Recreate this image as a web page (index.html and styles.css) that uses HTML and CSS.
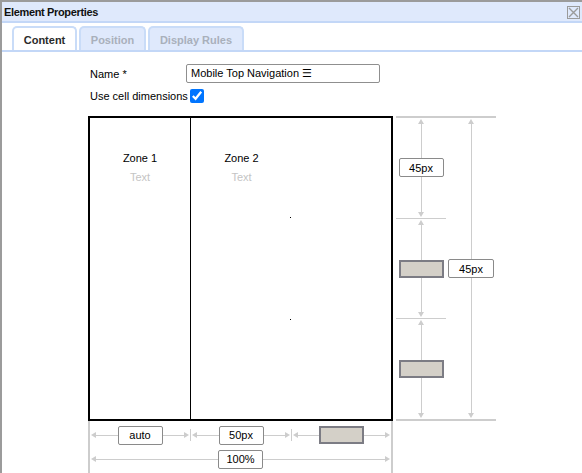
FILE: index.html
```html
<!DOCTYPE html>
<html lang="en">
<head>
    <meta charset="UTF-8">
    <title>Element Properties</title>
    <link rel="stylesheet" href="styles.css">
</head>
<body>
    <div class="dialog">
        <div class="titlebar">
            <span class="title">Element Properties</span>
            <svg class="close" width="13" height="13" viewBox="0 0 13 13">
                <rect x="0.5" y="0.5" width="12" height="12" fill="none" stroke="#9a9a9a"/>
                <path d="M2 2 L11 11 M11 2 L2 11" stroke="#9a9a9a" stroke-width="1.4"/>
            </svg>
        </div>

        <div class="tabs">
            <div class="tab active tab-content">Content</div>
            <div class="tab tab-position">Position</div>
            <div class="tab tab-rules">Display Rules</div>
        </div>

        <div class="content">
            <div class="row">
                <label class="label">Name *</label>
                <input type="text" class="name-input" value="Mobile Top Navigation ☰">
            </div>
            <div class="row check-row">
                <label>Use cell dimensions</label>
                <input type="checkbox" class="check" checked>
            </div>

            <div class="layout">
                <div class="frame">
                    <div class="zone zone-first">
                        <div class="zone-name">Zone 1</div>
                        <div class="zone-text">Text</div>
                    </div>
                    <div class="zone">
                        <div class="zone-name">Zone 2</div>
                        <div class="zone-text">Text</div>
                        <span class="dot dot-a"></span>
                        <span class="dot dot-b"></span>
                    </div>
                    <div class="zone"></div>
                </div>

                <div class="vruler">
                    <div class="vcol">
                        <div class="vseg">
                            <span class="arr-up"></span><span class="vline"></span>
                            <input type="text" class="size" value="45px">
                            <span class="vline"></span><span class="arr-down"></span>
                        </div>
                        <div class="vseg tick-top">
                            <span class="arr-up"></span><span class="vline"></span>
                            <div class="blank"></div>
                            <span class="vline"></span><span class="arr-down"></span>
                        </div>
                        <div class="vseg tick-top">
                            <span class="arr-up"></span><span class="vline"></span>
                            <div class="blank"></div>
                            <span class="vline"></span><span class="arr-down"></span>
                        </div>
                    </div>
                    <div class="vcol">
                        <div class="vseg">
                            <span class="arr-up"></span><span class="vline"></span>
                            <input type="text" class="size wide" value="45px">
                            <span class="vline"></span><span class="arr-down"></span>
                        </div>
                    </div>
                </div>

                <div class="hruler">
                    <div class="hrow">
                        <div class="hseg">
                            <span class="arr-left"></span><span class="hline"></span>
                            <input type="text" class="size" value="auto">
                            <span class="hline"></span><span class="arr-right"></span>
                        </div>
                        <span class="tick"></span>
                        <div class="hseg">
                            <span class="arr-left"></span><span class="hline"></span>
                            <input type="text" class="size" value="50px">
                            <span class="hline"></span><span class="arr-right"></span>
                        </div>
                        <span class="tick"></span>
                        <div class="hseg">
                            <span class="arr-left"></span><span class="hline"></span>
                            <div class="blank"></div>
                            <span class="hline"></span><span class="arr-right"></span>
                        </div>
                    </div>
                    <div class="hseg total">
                        <span class="arr-left"></span><span class="hline"></span>
                        <input type="text" class="size" value="100%">
                        <span class="hline"></span><span class="arr-right"></span>
                    </div>
                </div>
            </div>
        </div>
    </div>
</body>
</html>
```

FILE: styles.css
```css
body {
    margin: 0;
    font-family: "Liberation Sans", Arial, sans-serif;
    font-size: 11px;
    color: #000;
    background-color: #fff;
}
.dialog {
    height: 471px;
    border-top: 2px solid #9b9b9b;
    border-left: 2px solid #9b9b9b;
    overflow: hidden;
}
.titlebar {
    height: 19px;
    display: flex;
    align-items: center;
    justify-content: space-between;
    padding: 0 2px 0 2px;
    background-color: #dfe9fc;
    border-bottom: 2px solid #c3d7f7;
}
.title {
    font-weight: bold;
    font-size: 11px;
    letter-spacing: -0.35px;
    color: #111;
}
.close {
    display: block;
    margin-top: 1px;
}
.tabs {
    display: flex;
    gap: 2px;
    padding: 3px 0 0 10px;
    border-bottom: 2px solid #c3d7f7;
}
.tab {
    height: 22px;
    line-height: 24px;
    text-align: center;
    font-weight: bold;
    color: #a9b0bb;
    background-color: #dfe9fc;
    border: 2px solid #c9dcf8;
    border-bottom: 0;
    border-radius: 5px 5px 0 0;
    box-sizing: content-box;
}
.tab.active {
    background-color: #fff;
    color: #2a2a2a;
}
.tab-content { width: 61px; }
.tab-position { width: 63px; }
.tab-rules { width: 92px; }

.content {
    padding: 12px 0 0 86px;
}
.row {
    display: flex;
    align-items: center;
}
.label {
    width: 96px;
    padding-left: 2px;
}
.name-input {
    width: 194px;
    height: 19px;
    box-sizing: border-box;
    margin: 0;
    padding: 0 4px;
    border: 1px solid #8f8f8f;
    border-radius: 2px;
    font-family: "Liberation Sans", "DejaVu Sans", Arial, sans-serif;
    font-size: 11px;
}
.check-row {
    margin-top: 6px;
    padding-left: 2px;
}
.check {
    width: 14px;
    height: 14px;
    margin: 0 0 0 2px;
}

.layout {
    display: grid;
    grid-template-columns: 305px 103px;
    grid-template-rows: 305px 52px;
    margin-top: 13px;
}
.frame {
    display: grid;
    grid-template-columns: 101px 101px 1fr;
    border: 2px solid #000;
}
.zone {
    position: relative;
    text-align: center;
    padding-top: 33px;
}
.zone-first {
    border-right: 1px solid #000;
}
.zone-name {
    line-height: 14px;
}
.zone-text {
    margin-top: 5px;
    line-height: 14px;
    color: #c4c4c4;
}
.dot {
    position: absolute;
    right: 1px;
    width: 1px;
    height: 1px;
    background-color: #000;
}
.dot-a { top: 99px; }
.dot-b { top: 201px; }

.size {
    width: 45px;
    height: 19px;
    box-sizing: border-box;
    margin: 0;
    padding: 0;
    border: 1px solid #8a8a8a;
    border-radius: 2px;
    text-align: center;
    font-family: "Liberation Sans", Arial, sans-serif;
    font-size: 11px;
    flex: none;
}
.size.wide {
    width: 46px;
}
.blank {
    width: 45px;
    height: 18px;
    box-sizing: border-box;
    background-color: #d4d0c8;
    border: 2px solid #7c7c84;
    flex: none;
}

.vruler {
    display: grid;
    grid-template-columns: 50px 50px;
    margin-left: 3px;
    border-top: 2px solid #cdcdcd;
    border-bottom: 2px solid #cdcdcd;
}
.vcol {
    display: flex;
    flex-direction: column;
}
.vseg {
    flex: 1;
    display: flex;
    flex-direction: column;
    align-items: center;
}
.tick-top {
    border-top: 1px solid #cdcdcd;
}
.vline {
    flex: 1;
    width: 1px;
    background-color: #cdcdcd;
}
.arr-up {
    border-left: 3px solid transparent;
    border-right: 3px solid transparent;
    border-bottom: 5px solid #cdcdcd;
    margin-top: 1px;
}
.arr-down {
    border-left: 3px solid transparent;
    border-right: 3px solid transparent;
    border-top: 5px solid #cdcdcd;
    margin-bottom: 1px;
}

.hruler {
    display: flex;
    flex-direction: column;
    padding-top: 2px;
    border-left: 2px solid #cdcdcd;
    border-right: 2px solid #cdcdcd;
    width: 301px;
}
.hrow {
    display: flex;
    align-items: center;
    height: 24px;
}
.hrow .hseg {
    width: 100px;
}
.hrow .hseg:last-child {
    flex: 1;
}
.tick {
    width: 1px;
    height: 12px;
    background-color: #cdcdcd;
}
.hseg {
    display: flex;
    align-items: center;
}
.hseg.total {
    height: 24px;
}
.hline {
    flex: 1;
    height: 1px;
    background-color: #cdcdcd;
}
.arr-left {
    border-top: 3px solid transparent;
    border-bottom: 3px solid transparent;
    border-right: 5px solid #cdcdcd;
    margin-left: 1px;
}
.arr-right {
    border-top: 3px solid transparent;
    border-bottom: 3px solid transparent;
    border-left: 5px solid #cdcdcd;
    margin-right: 1px;
}
```
